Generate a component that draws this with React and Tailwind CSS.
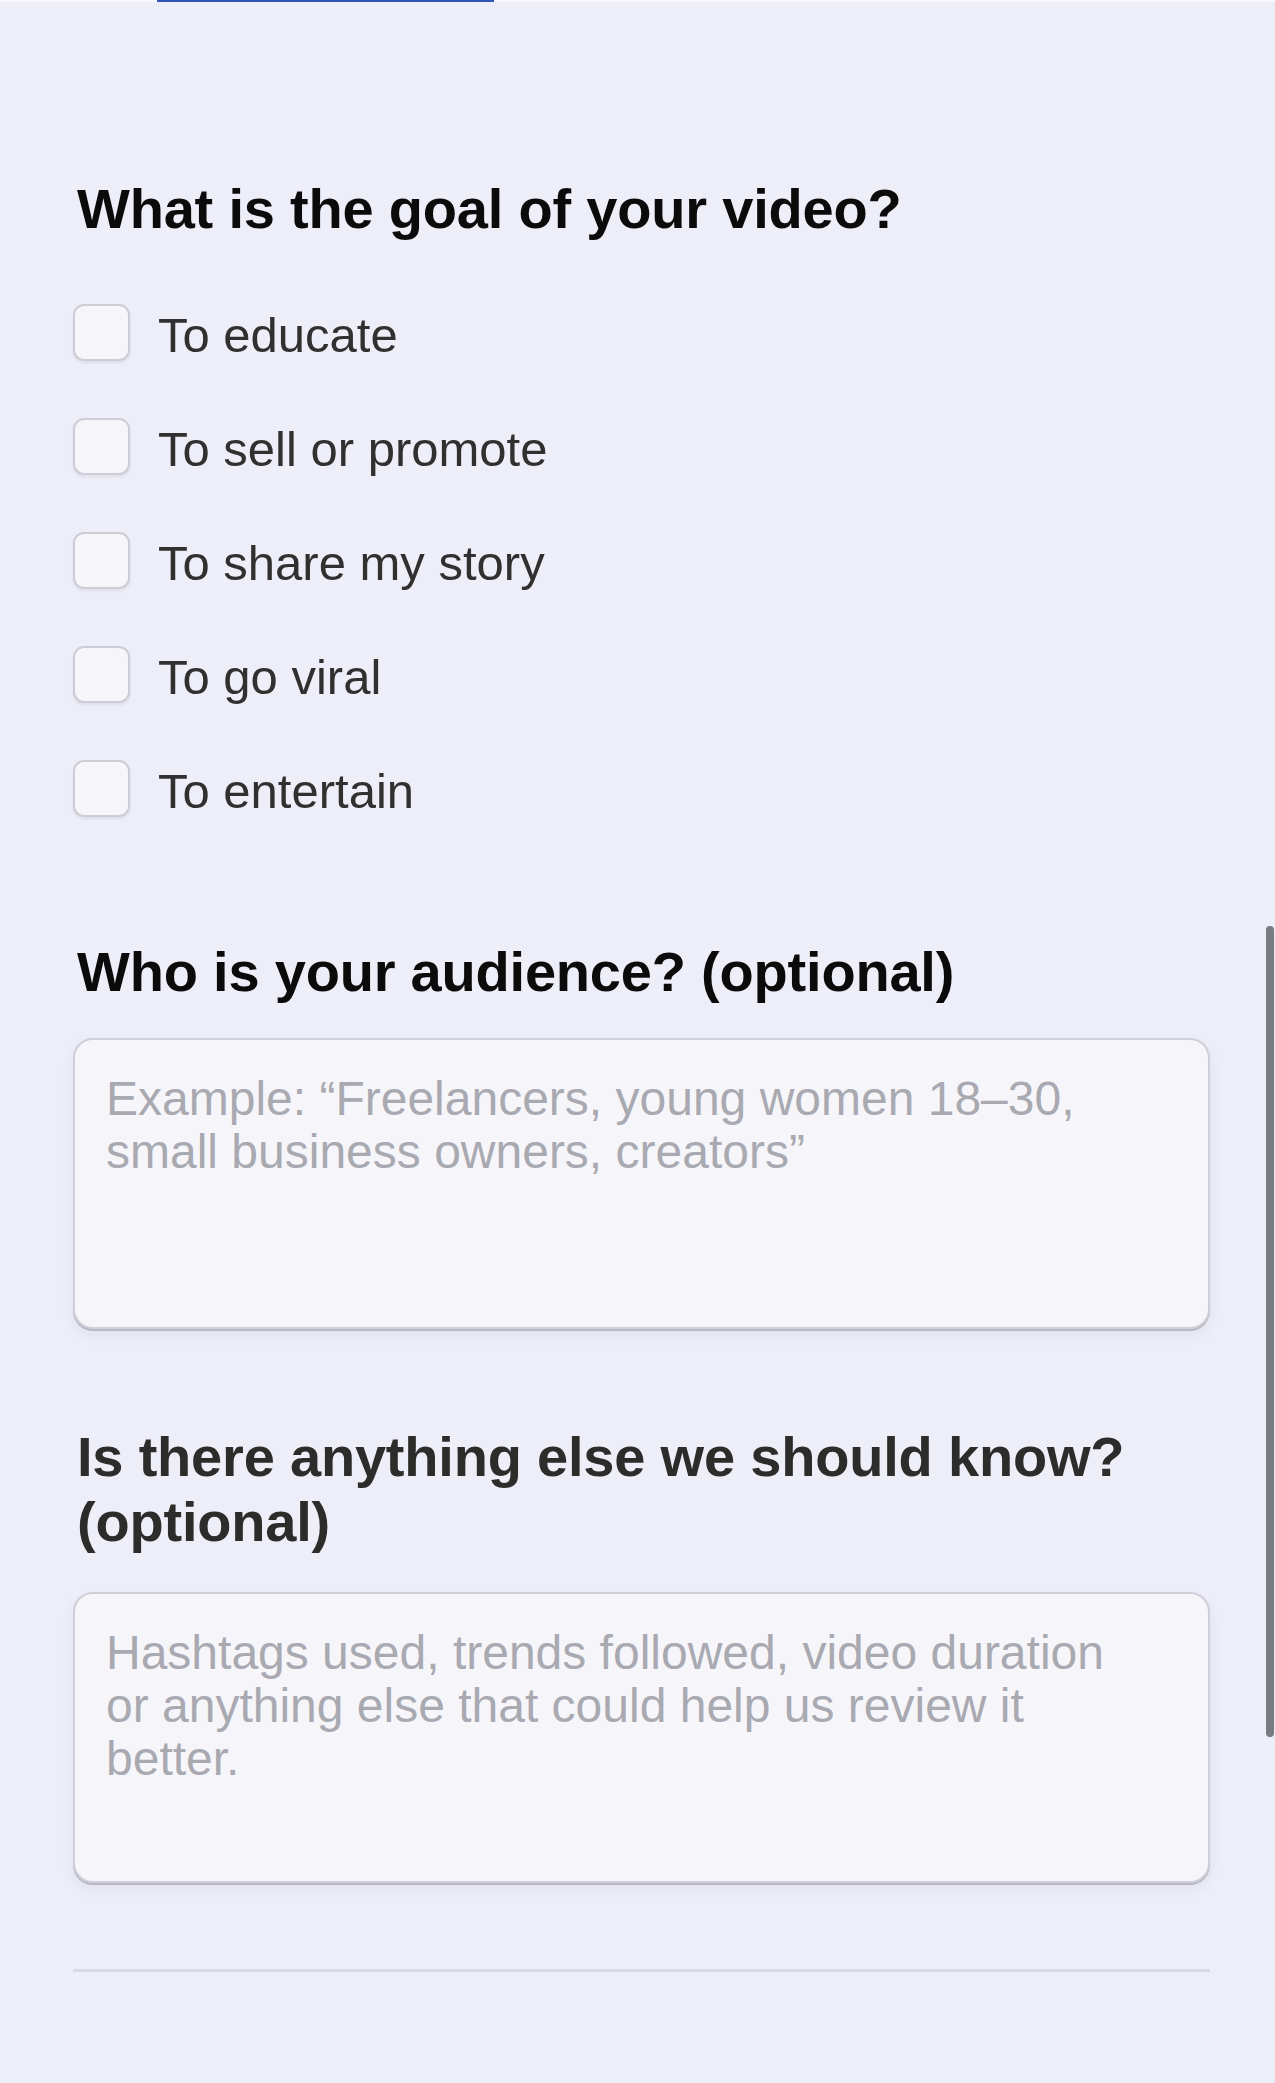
const goals = [
  "To educate",
  "To sell or promote",
  "To share my story",
  "To go viral",
  "To entertain",
];

function Checkbox() {
  return (
    <span className="block w-[57px] h-[57px] shrink-0 rounded-[11px] border-2 border-[#cdcdd6] bg-[#f5f5fa] shadow-[0_2px_3px_rgba(40,40,70,0.08)]" />
  );
}

function Heading({ children, className = "" }) {
  return (
    <h2
      className={
        "ml-1 text-[56px] leading-[65px] font-bold tracking-[-0.2px] " + className
      }
    >
      {children}
    </h2>
  );
}

function TextArea({ placeholder }) {
  return (
    <textarea
      placeholder={placeholder}
      className="block w-full h-[291px] resize-none rounded-[20px] border-2 border-[#cfcfd9] bg-[#f6f6fa] pl-[31px] pr-[80px] pt-[32px] text-[48px] leading-[53px] text-[#333] placeholder:text-[#a9a9b1] shadow-[0_2px_0_#b9b9c1,0_6px_14px_rgba(40,40,80,0.06)] outline-none"
    />
  );
}

export default function App() {
  return (
    <div className="relative min-h-[2083px] bg-[#eeeef9] font-['Liberation_Sans',Arial,sans-serif]">
      {/* tab indicator strip */}
      <div className="h-[2px] bg-[#f9f9fd] flex">
        <div className="ml-[157px] w-[337px] bg-[#3155b8]" />
      </div>

      <div className="pl-[73px] pr-[65px] pt-[174px]">
        <Heading className="text-[#0b0b0b]">What is the goal of your video?</Heading>

        <div className="mt-[63px] flex flex-col gap-[57px]">
          {goals.map((g) => (
            <label key={g} className="flex items-center h-[57px] gap-[28px]">
              <Checkbox />
              <span className="pt-[6px] text-[49px] leading-[57px] text-[#303030]">{g}</span>
            </label>
          ))}
        </div>

        <Heading className="mt-[122px] text-[#0b0b0b]">Who is your audience? (optional)</Heading>
        <div className="mt-[34px]">
          <TextArea placeholder="Example: “Freelancers, young women 18–30, small business owners, creators”" />
        </div>

        <Heading className="mt-[95px] text-[#2c2c2a]">
          Is there anything else we should know? (optional)
        </Heading>
        <div className="mt-[38px]">
          <TextArea placeholder="Hashtags used, trends followed, video duration or anything else that could help us review it better." />
        </div>

        <div className="mt-[86px] h-[3px] bg-[#d9d9e3]" />
      </div>

      {/* scroll indicator */}
      <div className="absolute right-[1px] top-[926px] w-[8px] h-[811px] rounded-full bg-[#7a7a81]" />
    </div>
  );
}
